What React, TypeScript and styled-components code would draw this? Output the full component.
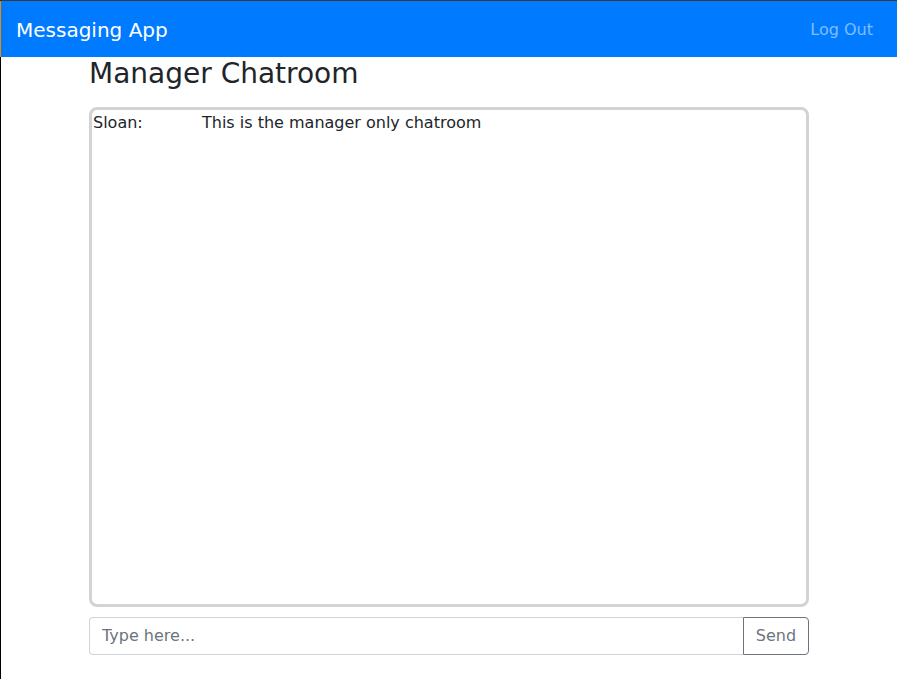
import React from "react";
import styled, { createGlobalStyle } from "styled-components";

const Global = createGlobalStyle`
  html, body { margin: 0; padding: 0; background: #fff; }
  body {
    font-family: "DejaVu Sans", sans-serif;
    font-size: 16px;
    line-height: 1.5;
    color: #212529;
  }
  * { box-sizing: border-box; }
`;

const Page = styled.div`
  min-height: 679px;
  border-top: 1px solid #3a3a3a;
  border-left: 1px solid #000;
`;

const Navbar = styled.nav`
  display: flex;
  align-items: center;
  justify-content: space-between;
  height: 56px;
  padding: 2px 24px 0 15px;
  margin-left: -1px;
  border-left: 1px solid #f08a00;
  background: #007bff;
`;

const Brand = styled.span`
  font-size: 20px;
  color: #fff;
`;

const NavLink = styled.span`
  font-size: 16px;
  color: rgba(255, 255, 255, 0.5);
`;

const Container = styled.main`
  width: 720px;
  margin: 0 auto;
`;

const Title = styled.h3`
  margin: 0 0 16px;
  font-size: 28px;
  font-weight: 400;
  line-height: 1.2;
  color: #212529;
`;

const ChatBox = styled.div`
  height: 500px;
  border: 3px solid #d3d3d3;
  border-radius: 8px;
  padding: 0 1px;
  overflow-y: auto;
`;

const MessageRow = styled.div`
  display: grid;
  grid-template-columns: 109px 1fr;
  line-height: 20px;
  padding-top: 3px;
`;

const Sender = styled.span``;
const Body = styled.span``;

const InputGroup = styled.form`
  display: flex;
  margin-top: 10px;
  height: 38px;
`;

const Input = styled.input`
  flex: 1;
  min-width: 0;
  height: 38px;
  padding: 6px 12px;
  font-family: "DejaVu Sans", sans-serif;
  font-size: 16px;
  color: #495057;
  border: 1px solid #ced4da;
  border-right: none;
  border-radius: 4px 0 0 4px;
  outline: none;
  &::placeholder { color: #6c757d; opacity: 1; }
`;

const SendButton = styled.button`
  width: 66px;
  height: 38px;
  padding: 0;
  font-family: "DejaVu Sans", sans-serif;
  font-size: 16px;
  color: #6c757d;
  background: transparent;
  border: 1px solid #6c757d;
  border-radius: 0 4px 4px 0;
  cursor: pointer;
`;

export default function App() {
  return (
    <Page>
      <Global />
      <Navbar>
        <Brand>Messaging App</Brand>
        <NavLink>Log Out</NavLink>
      </Navbar>
      <Container>
        <Title>Manager Chatroom</Title>
        <ChatBox>
          <MessageRow>
            <Sender>Sloan:</Sender>
            <Body>This is the manager only chatroom</Body>
          </MessageRow>
        </ChatBox>
        <InputGroup onSubmit={(e) => e.preventDefault()}>
          <Input placeholder="Type here..." />
          <SendButton type="submit">Send</SendButton>
        </InputGroup>
      </Container>
    </Page>
  );
}
